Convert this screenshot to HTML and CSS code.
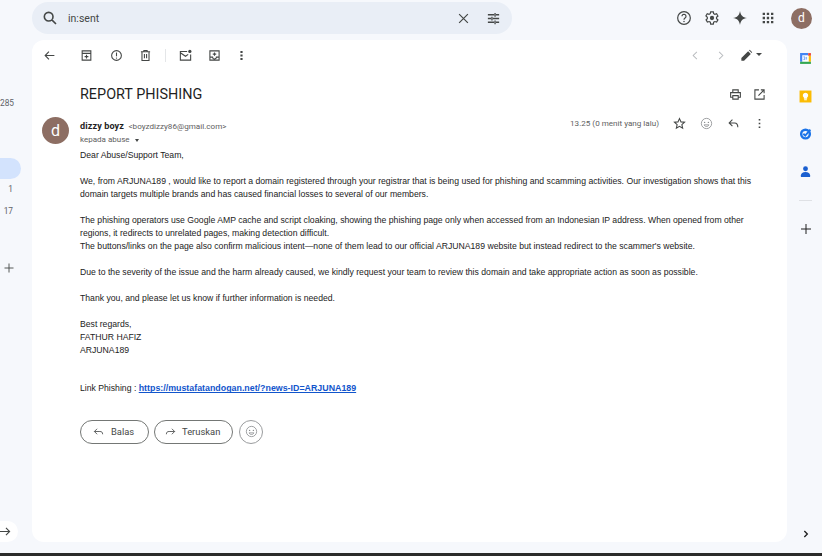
FILE: index.html
```html
<!DOCTYPE html>
<html lang="id">
<head>
<meta charset="utf-8">
<title>REPORT PHISHING</title>
<link rel="stylesheet" href="styles.css">
</head>
<body>
<div class="app">
  <header class="topbar">
    <div class="search">
      <svg class="ic-16" viewBox="0 0 24 24"><path class="s" stroke-width="2.4" d="M10 3.500a6.500 6.500 0 1 1 0 13 6.500 6.500 0 0 1 0-13zM14.800 14.800 21 21"/></svg>
      <span class="query">in:sent</span>
      <svg class="clear" viewBox="0 0 24 24"><path class="s" stroke-width="1.900" d="M5 5l14 14M19 5 5 19"/></svg>
      <svg class="tune" viewBox="0 0 24 24"><path class="s" stroke-width="2.100" d="M3 6h10M16 6h5M14.500 3v6M3 12h5M11 12h10M9.500 9v6M3 18h10M16 18h5M14.500 15v6"/></svg>
    </div>
    <div class="top-actions">
      <svg class="ic-18" viewBox="0 0 24 24"><circle class="s" stroke-width="1.800" cx="12" cy="12" r="9.500"/><path class="s" stroke-width="1.800" d="M9 9.500a3 3 0 1 1 4.600 2.500c-1 .7-1.600 1.200-1.600 2.500"/><circle class="f" cx="12" cy="17.300" r="1.100"/></svg>
      <svg class="ic-18" viewBox="0 0 24 24"><path class="s" stroke-width="1.800" d="M10 2.800h4l.5 2.700 1.800 1 2.600-.9 2 3.400-2.100 1.800v2.200l2.100 1.800-2 3.400-2.600-.9-1.800 1-.5 2.800h-4l-.5-2.800-1.800-1-2.600.9-2-3.400L5 13v-2L2.900 9l2-3.400 2.600.9 1.800-1z"/><circle class="f" cx="12" cy="12" r="3.200"/></svg>
      <svg class="ic-18" viewBox="0 0 24 24"><path class="f" d="M12 1.500c1 6.500 4 9.500 10.500 10.500-6.500 1-9.500 4-10.500 10.500-1-6.500-4-9.500-10.500-10.500 6.500-1 9.500-4 10.500-10.500z"/></svg>
      <svg class="ic-18" viewBox="0 0 24 24"><path class="f" d="M4 4h3.500v3.500H4zM10.200 4h3.500v3.500h-3.500zM16.500 4H20v3.500h-3.500zM4 10.200h3.500v3.500H4zM10.200 10.200h3.500v3.500h-3.500zM16.500 10.200H20v3.500h-3.500zM4 16.500h3.500V20H4zM10.200 16.500h3.500V20h-3.500zM16.500 16.500H20V20h-3.500z"/></svg>
      <span class="avatar avatar-small">d</span>
    </div>
  </header>

  <div class="workspace">
    <nav class="left-rail">
      <span class="count count-first">285</span>
      <span class="active-pill"></span>
      <span class="count count-one">1</span>
      <span class="count count-two">17</span>
      <svg class="rail-plus" viewBox="0 0 24 24"><path class="s" stroke-width="1.800" d="M12 3v18M3 12h18"/></svg>
      <span class="expand"><svg viewBox="0 0 24 24"><path class="s" stroke-width="2.400" d="M0 12h21M13 4l8 8-8 8"/></svg></span>
    </nav>

    <main class="card">
      <div class="toolbar">
        <div class="tool-group">
          <svg class="ic-14" viewBox="0 0 24 24"><path class="s" stroke-width="2" d="M21 12H4M11 5l-7 7 7 7"/></svg>
          <svg class="ic-14 tool-first" viewBox="0 0 24 24"><path class="s" stroke-width="2" d="M4 3.500h16V20.500H4zM4 8h16M12 10.500v7M8.500 14h7"/></svg>
          <svg class="ic-14 tool" viewBox="0 0 24 24"><circle class="s" stroke-width="2" cx="12" cy="12" r="9"/><path class="s" stroke-width="2" d="M12 6.500v7"/><circle class="f" cx="12" cy="16.800" r="1.200"/></svg>
          <svg class="ic-14 tool" viewBox="0 0 24 24"><path class="s" stroke-width="2" d="M3.500 5h17M9 5V2.800h6V5M5.500 5h13v16.200h-13zM10 9v8M14 9v8"/></svg>
          <span class="tool-sep"></span>
          <svg class="ic-14 tool-mail" viewBox="0 0 24 24"><path class="s" stroke-width="2" d="M15 4.500H2.500v16h19V10M2.500 7l9.500 6.500L17 10"/><circle class="f" cx="20" cy="4.500" r="3"/></svg>
          <svg class="ic-14 tool" viewBox="0 0 24 24"><path class="s" stroke-width="2" d="M3.500 3.500h17v17h-17zM3.500 15h5a3.500 3.500 0 0 0 7 0h5M12 6.500v6M8.800 9.500h6.400"/></svg>
          <svg class="ic-14 tool-last" viewBox="0 0 24 24"><path class="f" d="M10 3.500h4v4h-4zM10 10h4v4h-4zM10 16.500h4v4h-4z"/></svg>
        </div>
        <div class="tool-group">
          <svg class="ic-12" viewBox="0 0 24 24"><path class="s-faint" stroke-width="2.200" d="M15 4l-8 8 8 8"/></svg>
          <svg class="ic-12 pager-next" viewBox="0 0 24 24"><path class="s-faint" stroke-width="2.200" d="M9 4l8 8-8 8"/></svg>
          <svg class="ic-14 pen" viewBox="0 0 24 24"><path class="f" d="M2.500 21.500v-5L15 4l5 5L7.500 21.500zM16.500 2.500l1.500-1 4.500 4.500-1 1.500z"/></svg>
          <span class="caret"></span>
        </div>
      </div>

      <div class="subject-row">
        <h1 class="subject">REPORT PHISHING</h1>
        <div class="subject-actions">
          <svg class="ic-14" viewBox="0 0 24 24"><path class="s" stroke-width="2" d="M7 8V3.500h10V8M7 17H3V8.500h18V17h-4M7 14h10v6.500H7z"/></svg>
          <svg class="ic-14" viewBox="0 0 24 24"><path class="s" stroke-width="2" d="M20.500 13v7.500h-17v-17H11M14.500 3.500h6v6M20.500 3.500 10 14"/></svg>
        </div>
      </div>

      <div class="message">
        <span class="avatar avatar-large">d</span>
        <div class="message-main">
          <div class="sender-row">
            <div class="sender">
              <div class="sender-line"><strong class="sender-name">dizzy boyz</strong> <span class="sender-mail">&lt;boyzdizzy86@gmail.com&gt;</span></div>
              <div class="to-line">kepada abuse <span class="to-caret"></span></div>
            </div>
            <div class="msg-meta">
              <span class="time">13.25 (0 menit yang lalu)</span>
              <svg class="ic-13 star" viewBox="0 0 24 24"><path class="s" stroke-width="2" d="M12 3l2.800 6 6.500.7-4.900 4.400 1.400 6.500-5.800-3.300-5.800 3.300 1.400-6.500-4.900-4.400 6.500-.7z"/></svg>
              <svg class="ic-14 smile" viewBox="0 0 24 24"><circle class="s-grey" stroke-width="1.500" cx="12" cy="12" r="9.500"/><circle class="f-grey" cx="8.500" cy="10" r="1.300"/><circle class="f-grey" cx="15.500" cy="10" r="1.300"/><path class="s-grey" stroke-width="1.500" d="M7.500 14.500h9c-1 2-2.500 3-4.500 3s-3.500-1-4.500-3z"/></svg>
              <svg class="ic-14 reply" viewBox="0 0 24 24"><path class="s" stroke-width="2" d="M10 5l-6 6 6 6M4 11h10c4 0 6 2.500 6 8"/></svg>
              <svg class="ic-14" viewBox="0 0 24 24"><path class="f" d="M10.500 3.500h3v3h-3zM10.500 10.500h3v3h-3zM10.500 17.500h3v3h-3z"/></svg>
            </div>
          </div>
          <div class="body-text">
            <p>Dear Abuse/Support Team,</p>
            <p>We, from ARJUNA189 , would like to report a domain registered through your registrar that is being used for phishing and scamming activities. Our investigation shows that this<br>domain targets multiple brands and has caused financial losses to several of our members.</p>
            <p>The phishing operators use Google AMP cache and script cloaking, showing the phishing page only when accessed from an Indonesian IP address. When opened from other<br>regions, it redirects to unrelated pages, making detection difficult.<br>The buttons/links on the page also confirm malicious intent—none of them lead to our official ARJUNA189 website but instead redirect to the scammer's website.</p>
            <p>Due to the severity of the issue and the harm already caused, we kindly request your team to review this domain and take appropriate action as soon as possible.</p>
            <p>Thank you, and please let us know if further information is needed.</p>
            <p>Best regards,<br>FATHUR HAFIZ<br>ARJUNA189</p>
            <p class="link-line">Link Phishing : <a href="#">https://mustafatandogan.net/?news-ID=ARJUNA189</a></p>
          </div>
          <div class="reply-actions">
            <button class="pill pill-reply" type="button"><svg class="ic-11" viewBox="0 0 24 24"><path class="s" stroke-width="1.800" d="M9 6l-6 6 6 6M3 12h12c4 0 6 1.500 6 6"/></svg><span>Balas</span></button>
            <button class="pill pill-forward" type="button"><svg class="ic-11" viewBox="0 0 24 24"><path class="s" stroke-width="1.800" d="M15 6l6 6-6 6M21 12H9c-4 0-6 1.500-6 6"/></svg><span>Teruskan</span></button>
            <button class="pill-round" type="button"><svg class="ic-14" viewBox="0 0 24 24"><circle class="s-grey" stroke-width="1.500" cx="12" cy="12" r="9.500"/><circle class="f-grey" cx="8.500" cy="10" r="1.300"/><circle class="f-grey" cx="15.500" cy="10" r="1.300"/><path class="s-grey" stroke-width="1.500" d="M7.500 14.500h9c-1 2-2.500 3-4.500 3s-3.500-1-4.500-3z"/></svg></button>
          </div>
        </div>
      </div>
    </main>

    <aside class="right-rail">
      <svg class="app-ic" viewBox="0 0 24 24"><path fill="#fff" d="M2 2h20v20H2z"/><path fill="#4285f4" d="M2 2h15v4H6v12H2z"/><path fill="#ea4335" d="M17 2h5v5h-5z"/><path fill="#fbbc04" d="M18 7h4v11h-4z"/><path fill="#34a853" d="M2 18h20v4H2z"/><path fill="none" stroke="#4285f4" stroke-width="1.200" d="M8 9h3v2.500H9M11 11.500v2.500H8M14 9v5"/></svg>
      <svg class="app-ic" viewBox="0 0 24 24"><path fill="#fbbc04" d="M1 1h22v22H1z"/><path fill="#fff" d="M12 5a5 5 0 0 1 3 9v2H9v-2a5 5 0 0 1 3-9zM9.500 17.300h5V19h-5z"/></svg>
      <svg class="app-ic" viewBox="0 0 24 24"><circle cx="12" cy="13" r="8" fill="none" stroke="#1a73e8" stroke-width="4.500"/><path fill="none" stroke="#1a73e8" stroke-width="3.500" d="M8 12.500l3.500 3.500L21 5"/></svg>
      <svg class="app-ic" viewBox="0 0 24 24"><circle cx="12" cy="7" r="4.500" fill="#1a5fd0"/><path fill="#1a5fd0" d="M3.500 22v-3c0-3.500 3.500-6 8.500-6s8.500 2.500 8.500 6v3z"/></svg>
      <span class="rail-sep"></span>
      <svg class="rail-add" viewBox="0 0 24 24"><path class="s-dark" stroke-width="2" d="M12 2v20M2 12h20"/></svg>
      <svg class="rail-chevron" viewBox="0 0 24 24"><path class="s-dark" stroke-width="4" d="M7 3l9 9-9 9"/></svg>
    </aside>
  </div>
  <div class="taskbar"></div>
</div>
</body>
</html>
```
FILE: styles.css
```css
* { box-sizing: border-box; }
html, body { margin: 0; padding: 0; height: 100%; }
body {
  background: #f6f8fc;
  font-family: "Liberation Sans", Arial, sans-serif;
  color: #222;
  overflow: hidden;
}
svg { display: block; flex: none; }
.s { fill: none; stroke: #444746; }
.f { fill: #444746; }
.s-dark { fill: none; stroke: #1f1f1f; }
.s-grey { fill: none; stroke: #8a8d8f; }
.f-grey { fill: #8a8d8f; }
.s-faint { fill: none; stroke: #b9bcbf; }
.ic-11 { width: 11px; height: 11px; }
.ic-12 { width: 11px; height: 11px; }
.ic-13 { width: 13px; height: 13px; }
.ic-14 { width: 13px; height: 13px; }
.ic-16 { width: 16px; height: 16px; }
.ic-18 { width: 16px; height: 16px; }

.app { display: flex; flex-direction: column; height: 556px; width: 822px; }

/* top bar */
.topbar { display: flex; height: 40px; padding: 2px 10px 0 32px; justify-content: space-between; flex: none; }
.search {
  display: flex; align-items: center;
  width: 480px; height: 32px;
  padding: 0 11px 0 10px;
  background: #e9eef6;
  border-radius: 16px;
}
.query { margin-left: 10px; font: 10.500px "Roboto", sans-serif; color: #444746; flex: 1; }
.clear { width: 15px; height: 15px; margin-right: 15px; }
.tune { width: 15px; height: 15px; }
.top-actions { display: flex; align-items: center; gap: 12px; height: 32px; }
.avatar {
  display: flex; align-items: center; justify-content: center;
  border-radius: 50%; background: #8d6e63; color: #fff;
  font-family: "Roboto", sans-serif; flex: none;
}
.avatar-small { width: 21px; height: 21px; font-size: 12px; margin-left: 3px; }
.avatar-large { width: 27px; height: 27px; font-size: 16px; }

/* layout */
.workspace { display: flex; flex: 1; min-height: 0; }
.left-rail { width: 32px; flex: none; display: flex; flex-direction: column; align-items: flex-start; }
.count { font: 8.300px "Roboto", sans-serif; color: #5f6368; width: 13px; text-align: right; }
.count-first { margin-top: 58px; }
.active-pill { width: 21px; height: 21px; margin-top: 50px; background: #d3e3fd; border-radius: 0 11px 11px 0; flex: none; }
.count-one { margin-top: 5px; }
.count-two { margin-top: 12px; }
.rail-plus { width: 12px; height: 12px; margin: 46px 0 0 3px; }
.expand {
  margin-top: auto; width: 18px; height: 21px; background: #fff;
  border-radius: 0 11px 11px 0; display: flex; align-items: center;
}
.expand svg { width: 11px; height: 11px; }

.card { width: 755px; flex: none; height: 502px; background: #fff; border-radius: 12px; }
.toolbar { display: flex; justify-content: space-between; align-items: center; height: 31px; padding: 0 25px 0 11px; }
.tool-group { display: flex; align-items: center; }
.tool-first { margin-left: 24px; }
.tool { margin-left: 16.500px; }
.tool-sep { width: 1px; height: 13px; background: #e4e6e8; margin-left: 12.500px; }
.tool-mail { margin-left: 13px; }
.tool-last { margin-left: 14px; }
.pager-next { margin-left: 14px; }
.pen { margin-left: 14px; }
.caret { width: 0; height: 0; margin-left: 3px; margin-bottom: 3px; border: 3px solid transparent; border-top: 3px solid #444746; border-bottom: 0; }

.subject-row { display: flex; justify-content: space-between; align-items: center; padding: 0 21px 0 48px; height: 46px; }
.subject { margin: 0; font: 400 14.400px "Roboto", "Open Sans", sans-serif; color: #1f1f1f; }
.subject-actions { display: flex; gap: 11px; }

.message { display: flex; padding: 0 21px 0 10px; }
.message-main { margin-left: 11px; flex: 1; min-width: 0; }
.sender-row { display: flex; justify-content: space-between; height: 32px; }
.sender-line { line-height: 13px; }
.sender-name { font: 700 9.100px/13px "Roboto", sans-serif; color: #1f1f1f; letter-spacing: .1px; }
.sender-mail { font: 8.100px/13px "Roboto", sans-serif; color: #5e5e5e; }
.to-line { font: 8px/13px "Roboto", sans-serif; color: #5e5e5e; display: flex; align-items: center; }
.to-caret { width: 0; height: 0; margin-left: 5px; margin-top: 2px; border: 2.500px solid transparent; border-top: 3px solid #444746; border-bottom: 0; }
.msg-meta { display: flex; align-items: flex-start; height: 14px; }
.time { font: 8.100px/13px "Roboto", sans-serif; color: #5e5e5e; margin-right: 14px; }
.star { margin-right: 14px; }
.smile { margin-right: 14px; }
.reply { margin-right: 13px; }

.body-text { font-size: 8.660px; line-height: 12.970px; color: #222; }
.body-text p { margin: 0 0 12.970px; }
.body-text .link-line { margin: 25.940px 0 0; }
.link-line a { color: #1155cc; font-size: 8.850px; font-weight: 700; text-decoration: underline; }

.reply-actions { display: flex; gap: 5px; margin-top: 24.500px; align-items: center; }
.pill {
  display: flex; align-items: center; height: 24px;
  background: #fff; border: 1px solid #747775; border-radius: 12px;
  font: 400 9.400px "Roboto", sans-serif; color: #444746; padding: 0;
}
.pill-reply { width: 69px; padding-left: 12px; gap: 7px; }
.pill-forward { width: 79px; padding-left: 10px; gap: 6px; }
.pill-round {
  display: flex; align-items: center; justify-content: center;
  width: 24px; height: 24px; padding: 0; margin-left: 1px; background: #fff;
  border: 1px solid #9a9c9e; border-radius: 50%;
}

/* right rail */
.right-rail { width: 35px; flex: none; display: flex; flex-direction: column; align-items: center; padding: 12px 0 0 2px; }
.app-ic { width: 13px; height: 13px; margin-bottom: 24.500px; }
.rail-sep { width: 13px; height: 1px; background: #dfe1e5; margin-top: -2px; flex: none; }
.rail-add { width: 12px; height: 12px; margin-top: 22px; }
.rail-chevron { width: 8px; height: 8px; margin-top: auto; margin-bottom: 4px; }

.taskbar { height: 3px; flex: none; background: #2b2b2b; margin-top: 11px; }
```
